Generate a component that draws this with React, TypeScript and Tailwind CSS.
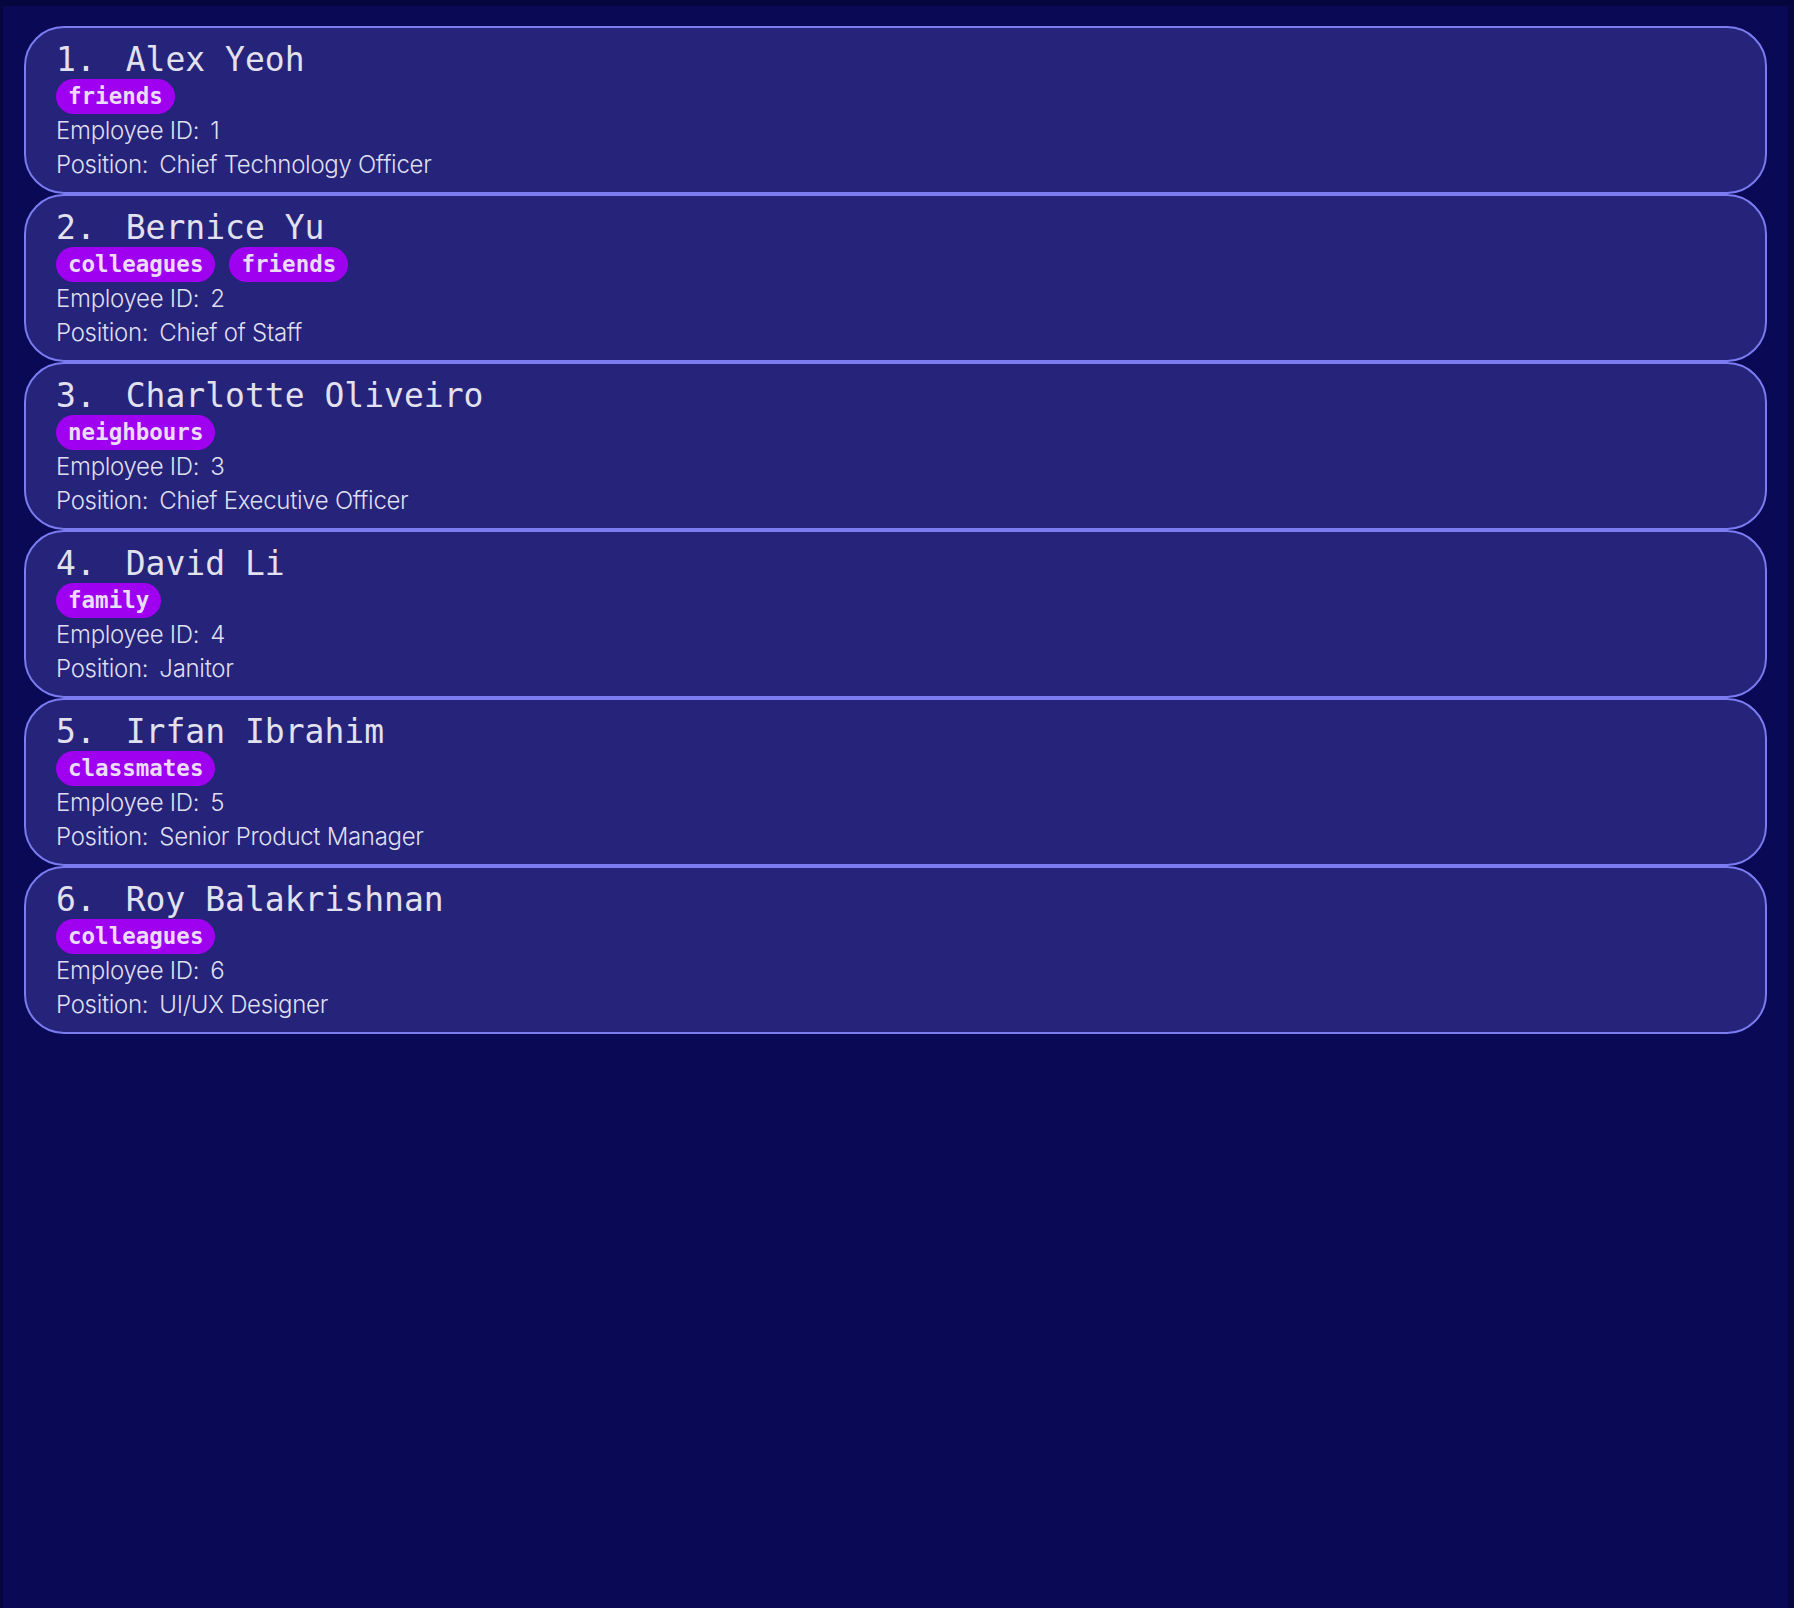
const PEOPLE = [
  { id: 1, name: "Alex Yeoh", tags: ["friends"], position: "Chief Technology Officer" },
  { id: 2, name: "Bernice Yu", tags: ["colleagues", "friends"], position: "Chief of Staff" },
  { id: 3, name: "Charlotte Oliveiro", tags: ["neighbours"], position: "Chief Executive Officer" },
  { id: 4, name: "David Li", tags: ["family"], position: "Janitor" },
  { id: 5, name: "Irfan Ibrahim", tags: ["classmates"], position: "Senior Product Manager" },
  { id: 6, name: "Roy Balakrishnan", tags: ["colleagues"], position: "UI/UX Designer" },
];

const mono = "font-['DejaVu_Sans_Mono','Liberation_Mono',monospace]";

function PersonCard({ person }: { person: (typeof PEOPLE)[number] }) {
  return (
    <div className="flex flex-col rounded-[40px] border-2 border-[#7a7cf0] bg-[#26237a] pb-[10px] pl-[30px] pr-[29px] pt-[13px]">
      {/* Nom */}
      <h2 className={`${mono} flex text-[33px] font-normal leading-[38px] text-[#e2e1f0]`}>
        <span className="mr-[30px]">{person.id}.</span>
        <span>{person.name}</span>
      </h2>
      {/* Etiquettes */}
      <div className="flex gap-[14px]">
        {person.tags.map((tag) => (
          <span
            key={tag}
            className={`${mono} rounded-full bg-[#a000f0] px-[12px] py-[4px] text-[22.5px] font-bold leading-[27px] text-[#eadcfa]`}
          >
            {tag}
          </span>
        ))}
      </div>
      {/* Details */}
      <div className="font-['Inter','Liberation_Sans',sans-serif] text-[24px] font-light leading-[34px] tracking-[-0.3px] text-[#dfdff0]">
        <p>
          Employee ID:<span className="ml-[11px]">{person.id}</span>
        </p>
        <p>
          Position:<span className="ml-[11px]">{person.position}</span>
        </p>
      </div>
    </div>
  );
}

export default function App() {
  return (
    <div className="min-h-[1608px] border-l-[3px] border-r-[6px] border-t-[6px] border-[#06063f] bg-[#0a0956]">
      <div className="flex flex-col px-[21px] pt-[20px]">
        {PEOPLE.map((person) => (
          <PersonCard key={person.id} person={person} />
        ))}
      </div>
    </div>
  );
}
